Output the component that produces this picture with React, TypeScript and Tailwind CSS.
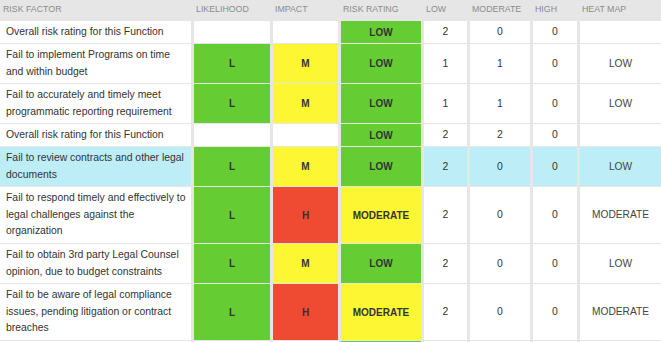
import React from 'react';

type Level = 'L' | 'M' | 'H' | '';
type Rating = 'LOW' | 'MODERATE';

interface Row {
  factor: string;
  likelihood: Level;
  impact: Level;
  rating: Rating;
  low: number;
  moderate: number;
  high: number;
  heat: string;
  h: string;
  highlight?: boolean;
  stub?: boolean;
}

const rows: Row[] = [
  { factor: 'Overall risk rating for this Function', likelihood: '', impact: '', rating: 'LOW', low: 2, moderate: 0, high: 0, heat: '', h: 'h-[22px]' },
  { factor: 'Fail to implement Programs on time and within budget', likelihood: 'L', impact: 'M', rating: 'LOW', low: 1, moderate: 1, high: 0, heat: 'LOW', h: 'h-[39px]' },
  { factor: 'Fail to accurately and timely meet programmatic reporting requirement', likelihood: 'L', impact: 'M', rating: 'LOW', low: 1, moderate: 1, high: 0, heat: 'LOW', h: 'h-[39px]' },
  { factor: 'Overall risk rating for this Function', likelihood: '', impact: '', rating: 'LOW', low: 2, moderate: 2, high: 0, heat: '', h: 'h-[22px]' },
  { factor: 'Fail to review contracts and other legal documents', likelihood: 'L', impact: 'M', rating: 'LOW', low: 2, moderate: 0, high: 0, heat: 'LOW', h: 'h-[39px]', highlight: true },
  { factor: 'Fail to respond timely and effectively to legal challenges against the organization', likelihood: 'L', impact: 'H', rating: 'MODERATE', low: 2, moderate: 0, high: 0, heat: 'MODERATE', h: 'h-[56px]' },
  { factor: 'Fail to obtain 3rd party Legal Counsel opinion, due to budget constraints', likelihood: 'L', impact: 'M', rating: 'LOW', low: 2, moderate: 0, high: 0, heat: 'LOW', h: 'h-[39px]' },
  { factor: 'Fail to be aware of legal compliance issues, pending litigation or contract breaches', likelihood: 'L', impact: 'H', rating: 'MODERATE', low: 2, moderate: 0, high: 0, heat: 'MODERATE', h: 'h-[56px]' },
  // next group's overall row, only its top edge is on screen
  { factor: '', likelihood: '', impact: '', rating: 'LOW', low: 0, moderate: 0, high: 0, heat: '', h: 'h-[22px]', stub: true },
];

const levelBg: Record<Level, string> = {
  L: 'bg-[#66cc33]',
  M: 'bg-[#fdf633]',
  H: 'bg-[#ef4a32]',
  '': 'bg-white',
};

const ratingBg: Record<Rating, string> = {
  LOW: 'bg-[#66cc33]',
  MODERATE: 'bg-[#fdf633]',
};

const COLS = 'grid-cols-[191px_76px_65px_80px_43px_60px_44px_81px]';
const headers = ['RISK FACTOR', 'LIKELIHOOD', 'IMPACT', 'RISK RATING', 'LOW', 'MODERATE', 'HIGH', 'HEAT MAP'];

export default function App() {
  return (
    <div className="w-[661px] h-[342px] overflow-hidden bg-white text-[#333]" style={{ fontFamily: '"Liberation Sans", Arial, sans-serif' }}>
      <div className={`grid ${COLS} gap-x-[3px] h-[20px] bg-[#e6e6e6]`}>
        {headers.map((t, i) => (
          <div key={t} className={`flex items-center text-[8.8px] text-[#8b8b8b] ${i === 0 ? 'pl-[3px]' : 'pl-[2px]'}`}>{t}</div>
        ))}
      </div>
      <div className={`grid ${COLS} gap-x-[3px] gap-y-px bg-[#e6e6e6] pt-px`}>
        {rows.map((r, i) => {
          const plain = r.highlight ? 'bg-[#bdeef7]' : 'bg-white';
          const show = !r.stub;
          return (
            <React.Fragment key={i}>
              <div className={`${r.h} ${plain} flex items-center pl-[6px] pr-[2px] text-[10.4px] leading-[16.6px]`}>{r.factor}</div>
              <div className={`${levelBg[r.likelihood]} flex items-center justify-center text-[10px] font-bold`}>{r.likelihood}</div>
              <div className={`${levelBg[r.impact]} flex items-center justify-center text-[10px] font-bold`}>{r.impact}</div>
              <div className={`${ratingBg[r.rating]} flex items-center justify-center text-[10px] font-bold`}>{show && r.rating}</div>
              <div className={`${plain} flex items-center justify-center text-[10.4px]`}>{show && r.low}</div>
              <div className={`${plain} flex items-center justify-center text-[10.4px]`}>{show && r.moderate}</div>
              <div className={`${plain} flex items-center justify-center text-[10.4px]`}>{show && r.high}</div>
              <div className={`${plain} flex items-center justify-center text-[10.2px] text-[#444]`}>{r.heat}</div>
            </React.Fragment>
          );
        })}
      </div>
    </div>
  );
}
